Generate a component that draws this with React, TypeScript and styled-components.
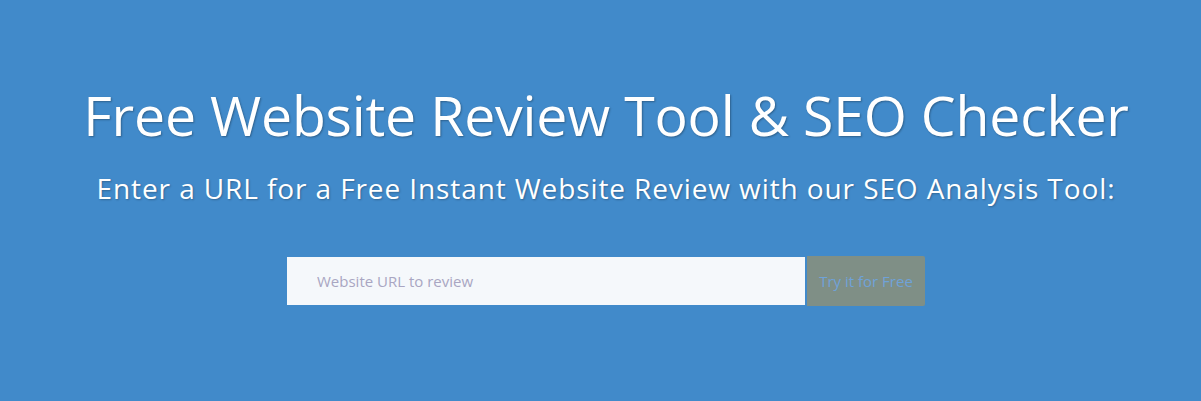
import React from 'react';
import styled, { createGlobalStyle } from 'styled-components';

const GlobalStyle = createGlobalStyle`
	html, body {
		margin: 0;
		padding: 0;
		background: #418aca;
	}
	body {
		font-family: 'Open Sans', 'Noto Sans', sans-serif;
	}
`;

const Hero = styled.section`
	height: 401px;
	background-color: #418aca;
	display: flex;
	flex-direction: column;
	align-items: center;
	box-sizing: border-box;
	padding: 77px 0 0 11px;
`;

const Title = styled.h1`
	margin: 0;
	font-size: 55.4px;
	font-weight: 400;
	line-height: 76px;
	color: #ffffff;
	text-shadow: 1px 1px 2px rgba(0, 0, 0, 0.3);
	letter-spacing: -0.2px;
`;

const Subtitle = styled.h2`
	margin: 15px 0 0;
	font-size: 28px;
	font-weight: 400;
	line-height: 40px;
	letter-spacing: 0.9px;
	color: #ffffff;
	text-shadow: 1px 1px 2px rgba(0, 0, 0, 0.25);
`;

const Form = styled.form`
	display: flex;
	align-items: center;
	margin-top: 48px;
	gap: 2px;
`;

const UrlInput = styled.input`
	width: 518px;
	height: 48px;
	box-sizing: border-box;
	border: none;
	outline: none;
	background-color: #f5f8fb;
	padding: 0 30px;
	font-family: 'Open Sans', sans-serif;
	font-size: 15px;
	color: #555;

	&::placeholder {
		color: #a9a6c2;
	}
`;

const SubmitButton = styled.button`
	width: 118px;
	height: 50px;
	padding: 0;
	border: none;
	border-radius: 0 2px 2px 0;
	background-color: #7f8f86;
	color: #6fa2d8;
	font-family: 'Open Sans', sans-serif;
	font-size: 15px;
	cursor: pointer;
`;

export default function App() {
	return (
		<>
			<GlobalStyle />
			<Hero>
				<Title>Free Website Review Tool &amp; SEO Checker</Title>
				<Subtitle>Enter a URL for a Free Instant Website Review with our SEO Analysis Tool:</Subtitle>
				<Form onSubmit={(e) => e.preventDefault()}>
					<UrlInput type="text" placeholder="Website URL to review" />
					<SubmitButton type="submit">Try it for Free</SubmitButton>
				</Form>
			</Hero>
		</>
	);
}
